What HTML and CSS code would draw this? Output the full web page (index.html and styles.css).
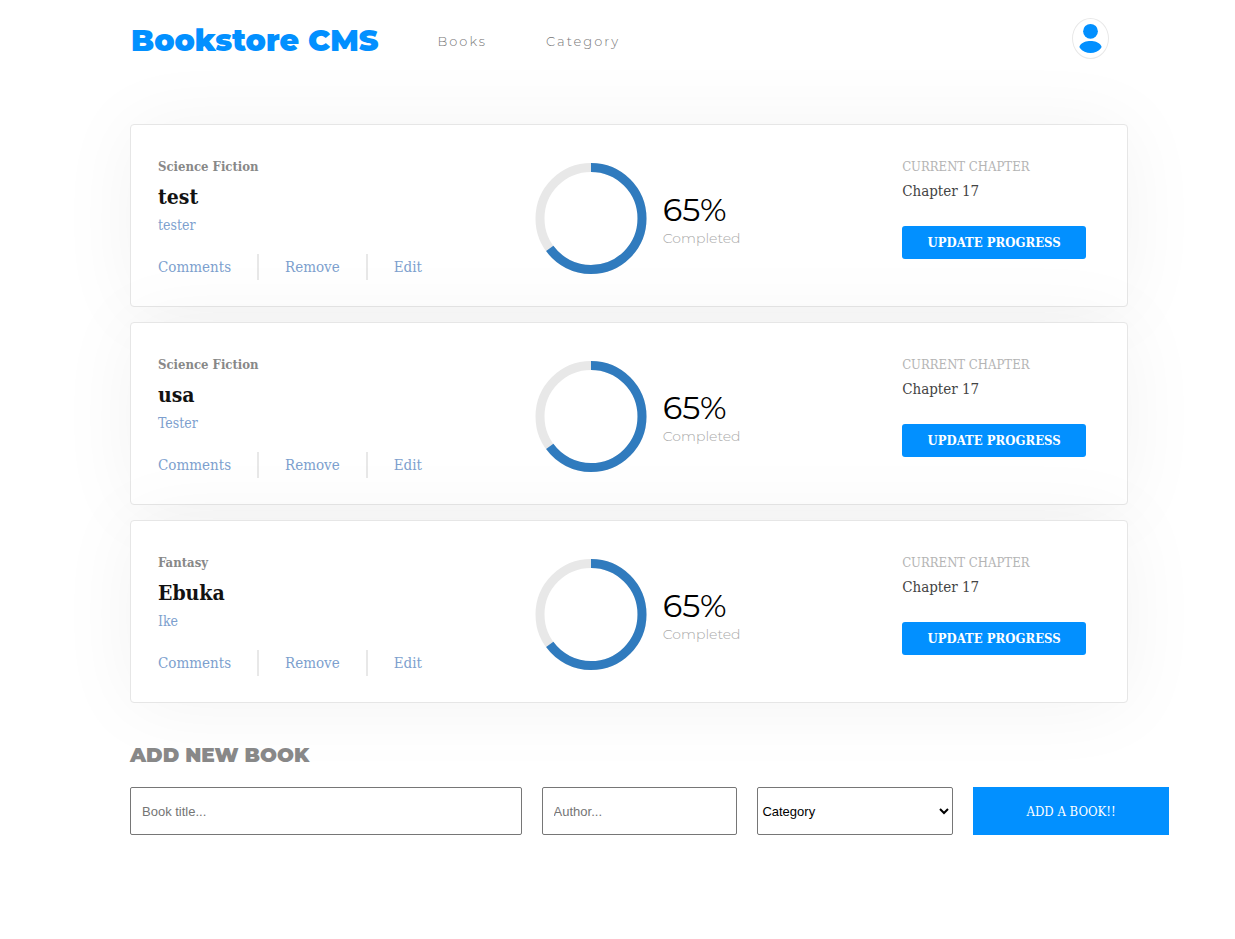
FILE: index.html
```html
<!DOCTYPE html>
<html lang="en">
<head>
<meta charset="utf-8">
<title>Bookstore CMS</title>
<link rel="stylesheet" href="styles.css">
</head>
<body>
<header class="header">
  <h1 class="logo">Bookstore CMS</h1>
  <nav class="nav">
    <a href="#books">Books</a>
    <a href="#category">Category</a>
  </nav>
  <button class="avatar" type="button" aria-label="Account">
    <svg width="24" height="31" viewBox="0 0 24 31" aria-hidden="true">
      <circle cx="11.500" cy="8.3" r="7.4"/>
      <path d="M.7 22.900C3 19 7.500 18 11.500 18s8.500 1 10.800 4.900c.4.700.2 1.300-.2 2C19.700 28.400 15.500 30 11.500 30S3.300 28.400.9 24.900c-.4-.7-.600-1.300-.2-2z"/>
    </svg>
  </button>
</header>
<main>
  <section class="books" id="books">
    <article class="card">
      <div class="info">
        <p class="genre">Science Fiction</p>
        <h2 class="title">test</h2>
        <p class="author">tester</p>
        <div class="actions"><button type="button">Comments</button><button type="button">Remove</button><button type="button">Edit</button></div>
      </div>
      <div class="progress">
        <svg class="ring" viewBox="0 0 112 111" aria-hidden="true"><circle class="track" cx="56" cy="55.500" r="51"/><circle class="value" cx="56" cy="55.500" r="51" pathLength="100" transform="rotate(-90 56 55.500)"/></svg>
        <div class="stats"><p class="percent">65%</p><p class="completed">Completed</p></div>
      </div>
      <div class="chapter">
        <p class="chapter-label">CURRENT CHAPTER</p>
        <p class="chapter-name">Chapter 17</p>
        <button class="update" type="button">UPDATE PROGRESS</button>
      </div>
    </article>
    <article class="card">
      <div class="info">
        <p class="genre">Science Fiction</p>
        <h2 class="title">usa</h2>
        <p class="author">Tester</p>
        <div class="actions"><button type="button">Comments</button><button type="button">Remove</button><button type="button">Edit</button></div>
      </div>
      <div class="progress">
        <svg class="ring" viewBox="0 0 112 111" aria-hidden="true"><circle class="track" cx="56" cy="55.500" r="51"/><circle class="value" cx="56" cy="55.500" r="51" pathLength="100" transform="rotate(-90 56 55.500)"/></svg>
        <div class="stats"><p class="percent">65%</p><p class="completed">Completed</p></div>
      </div>
      <div class="chapter">
        <p class="chapter-label">CURRENT CHAPTER</p>
        <p class="chapter-name">Chapter 17</p>
        <button class="update" type="button">UPDATE PROGRESS</button>
      </div>
    </article>
    <article class="card">
      <div class="info">
        <p class="genre">Fantasy</p>
        <h2 class="title">Ebuka</h2>
        <p class="author">Ike</p>
        <div class="actions"><button type="button">Comments</button><button type="button">Remove</button><button type="button">Edit</button></div>
      </div>
      <div class="progress">
        <svg class="ring" viewBox="0 0 112 111" aria-hidden="true"><circle class="track" cx="56" cy="55.500" r="51"/><circle class="value" cx="56" cy="55.500" r="51" pathLength="100" transform="rotate(-90 56 55.500)"/></svg>
        <div class="stats"><p class="percent">65%</p><p class="completed">Completed</p></div>
      </div>
      <div class="chapter">
        <p class="chapter-label">CURRENT CHAPTER</p>
        <p class="chapter-name">Chapter 17</p>
        <button class="update" type="button">UPDATE PROGRESS</button>
      </div>
    </article>
  </section>
  <section class="add">
    <h2 class="add-title">ADD NEW BOOK</h2>
    <form class="add-form">
      <input type="text" placeholder="Book title..." aria-label="Book title">
      <input type="text" placeholder="Author..." aria-label="Author">
      <select id="category" aria-label="Category"><option>Category</option></select>
      <button type="button">ADD A BOOK!!</button>
    </form>
  </section>
</main>
</body>
</html>
```
FILE: styles.css
```css
:root {
  --sans: Montserrat, Inter, "Open Sans", sans-serif;
  --slab: "Roboto Slab", "DejaVu Serif Condensed", "DejaVu Serif", serif;
  --blue: #0290ff;
}
* { box-sizing: border-box; }
body { margin: 0; background: #fff; font-family: var(--slab); }
h1, h2, p { margin: 0; }
button { font-family: inherit; border: 0; padding: 0; cursor: pointer; }

.header {
  display: flex;
  align-items: center;
  padding: 18px 126px 0 131px;
}
.logo { font: 900 30px/46px var(--sans); color: var(--blue); }
.nav { display: flex; gap: 59px; margin-left: 59px; }
.nav a {
  font: 300 13px/20px var(--sans);
  letter-spacing: 2px;
  color: #777;
  text-decoration: none;
}
.avatar {
  display: flex;
  align-items: center;
  justify-content: center;
  align-self: flex-start;
  width: 37px;
  height: 41px;
  margin-left: auto;
  border: 1px solid #e8e8e8;
  border-radius: 50%;
  background: #fff;
  fill: var(--blue);
}

.books {
  display: grid;
  gap: 15px;
  padding: 60px 107px 0 130px;
}
.card {
  display: grid;
  grid-template-columns: 40fr 39fr 21fr;
  padding: 32px 27px 26px;
  border: 1px solid #e6e6e6;
  border-radius: 4px;
  background: #fff;
  box-shadow: 0 2px 80px rgba(0, 0, 0, 0.05);
}
.genre { font-size: 13px; line-height: 20px; font-weight: 700; color: #888; }
.title { margin-top: 2px; font-size: 21px; line-height: 36px; font-weight: 700; color: #121212; }
.author { font-size: 14px; line-height: 20px; color: #7d9fce; }
.actions { display: flex; margin-top: 19px; }
.actions button {
  height: 26px;
  font-size: 15px;
  color: #7d9fce;
  background: none;
}
.actions button + button {
  margin-left: 26px;
  padding-left: 26px;
  border-left: 2px solid #e8e8e8;
}

.progress { display: flex; align-items: center; gap: 16px; }
.ring { width: 112px; height: 111px; fill: none; stroke-width: 9; }
.track { stroke: #e8e8e8; }
.value { stroke: #307bbe; stroke-dasharray: 65 35; }
.stats { padding-top: 6px; }
.percent { font: 400 32px/32px var(--sans); color: #000; }
.completed { font: 300 14px/24px var(--sans); color: #aaa; }

.chapter-label { font-size: 13px; line-height: 20px; color: #b4b4b4; }
.chapter-name { margin-top: 4px; font-size: 15px; line-height: 20px; color: #444; }
.update {
  width: 184px;
  height: 33px;
  margin-top: 25px;
  border-radius: 3px;
  background: var(--blue);
  color: #fff;
  font-size: 13px;
  font-weight: 700;
}

.add { padding: 40px 66px 40px 130px; }
.add-title { font: 900 20px/24px var(--sans); color: #888; }
.add-form {
  display: grid;
  grid-template-columns: 2fr 1fr 1fr 1fr;
  gap: 20px;
  margin-top: 20px;
}
.add-form input, .add-form select {
  min-width: 0;
  height: 48px;
  border: 1px solid #767676;
  border-radius: 2px;
  background: #fff;
  color: #000;
  font: 13px "Liberation Sans", Arial, sans-serif;
}
.add-form input { padding: 0 11px; }
.add-form input::placeholder { color: #757575; }
.add-form button { background: var(--blue); color: #fff; font-size: 13px; }
```
